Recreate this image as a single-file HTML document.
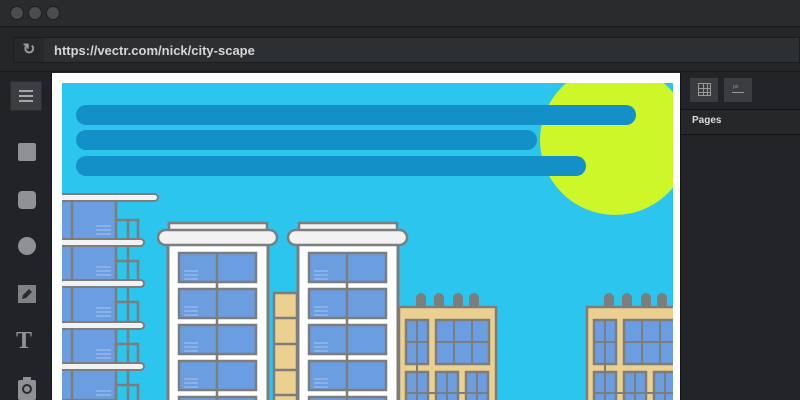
<!DOCTYPE html>
<html><head><meta charset="utf-8"><style>
*{margin:0;padding:0;box-sizing:border-box}
html,body{width:800px;height:400px;overflow:hidden}
body{background:#232427;font-family:"Liberation Sans",sans-serif;position:relative}
.top{position:absolute;left:0;top:0;width:800px;height:27px;background:#2a2b2d;border-bottom:1px solid #18191a}
.dot{position:absolute;top:6px;width:14px;height:14px;border-radius:50%;background:#4a4c4f;border:1px solid #1e1f20}
.addr{position:absolute;left:0;top:28px;width:800px;height:44px;background:#252628;border-bottom:1px solid #18191a}
.inp{position:absolute;left:13px;top:9px;width:787px;height:26px;background:#2d3032;border:1px solid #1c1d1e}
.rel{position:absolute;left:0;top:0;width:30px;height:24px;background:#262829;color:#9a9c9e;font-size:15px;text-align:center;line-height:24px;font-weight:bold}
.url{position:absolute;left:40px;top:5px;color:#d4d5d6;font-size:13px;font-weight:bold}
.left{position:absolute;left:0;top:73px;width:52px;height:327px;background:#222326;border-right:1px solid #151516}
.tool{position:absolute;left:18px;width:18px;height:18px;background:#8f9194}
.right{position:absolute;left:680px;top:73px;width:120px;height:327px;background:#232427;border-left:1px solid #111}
</style></head><body>
<div class="top">
<div class="dot" style="left:10px"></div><div class="dot" style="left:28px"></div><div class="dot" style="left:46px"></div>
</div>
<div class="addr"><div class="inp"><div class="rel">&#x21bb;</div><div class="url">https://vectr.com/nick/city-scape</div></div></div>
<div class="left">
<div style="position:absolute;left:10px;top:8px;width:32px;height:30px;background:#3c3e41;border:1px solid #2c2d2f"></div>
<div style="position:absolute;left:19px;top:17px;width:14px;height:2px;background:#a5a7a9;box-shadow:0 5px 0 #a5a7a9,0 10px 0 #a5a7a9"></div>
<div class="tool" style="top:70px;border-radius:2px"></div>
<div class="tool" style="top:118px;border-radius:4px"></div>
<div class="tool" style="top:164px;border-radius:50%"></div>
<svg style="position:absolute;left:18px;top:212px" width="18" height="18"><rect width="18" height="18" fill="#7f8184"/><path d="M4 14 L5 10 L11 4 L14 7 L8 13 Z" fill="#2a2b2d"/></svg>
<div style="position:absolute;left:16px;top:255px;color:#8f9194;font:bold 24px 'Liberation Serif',serif">T</div>
<svg style="position:absolute;left:18px;top:304px" width="18" height="23"><rect x="5" y="0" width="8" height="4" fill="#8f9194"/><rect y="3" width="18" height="20" rx="2" fill="#8f9194"/><circle cx="9" cy="12" r="4" fill="none" stroke="#2a2b2d" stroke-width="2"/></svg>
</div>
<div class="right">
<div style="position:absolute;left:9px;top:5px;width:28px;height:24px;background:#3a3c3f"></div>
<div style="position:absolute;left:17px;top:10px;width:13px;height:13px;border:1px solid #999;background:linear-gradient(#999,#999) 4px 0/1px 100% no-repeat,linear-gradient(#999,#999) 8px 0/1px 100% no-repeat,linear-gradient(#999,#999) 0 4px/100% 1px no-repeat,linear-gradient(#999,#999) 0 8px/100% 1px no-repeat"></div>
<div style="position:absolute;left:43px;top:5px;width:28px;height:24px;background:#3a3c3f"></div>
<div style="position:absolute;left:52px;top:11px;font-size:5px;color:#999">px</div>
<div style="position:absolute;left:51px;top:19px;width:12px;height:1px;background:#999"></div>
<div style="position:absolute;left:0;top:36px;width:120px;height:26px;border-top:1px solid #151516;border-bottom:1px solid #151516;background:#262729"></div>
<div style="position:absolute;left:11px;top:42px;color:#ddd;font-size:10px;font-weight:bold">Pages</div>
</div>
<svg style="position:absolute;left:52px;top:73px" width="628" height="327">
<rect width="628" height="327" fill="#fff"/>
<svg x="10" y="10" width="611" height="317">
<g transform="translate(-62,-83)">
<rect x="62" y="83" width="611" height="317" fill="#2bc5ee"/>
<circle cx="615" cy="140" r="75" fill="#cdf728"/>
<g stroke="#1490c8" stroke-width="20" stroke-linecap="round">
<line x1="86" y1="115" x2="626" y2="115"/><line x1="86" y1="140" x2="527" y2="140"/><line x1="86" y1="166" x2="576" y2="166"/></g>
<g stroke="#7d7d7d" stroke-width="2.5">
<rect x="40" y="200" width="76" height="200" fill="#6b9ee0"/>
<line x1="72" y1="200" x2="72" y2="400"/>
<g fill="none"><rect x="116" y="220" width="22" height="20"/><rect x="116" y="261" width="22" height="20"/><rect x="116" y="302" width="22" height="20"/><rect x="116" y="344" width="22" height="20"/><rect x="116" y="385" width="22" height="20"/>
<line x1="128" y1="220" x2="128" y2="400"/></g>
</g>
<g stroke="#a9c6ef" stroke-width="1"><path d="M96 226h15M96 230h15M96 234h15M96 267h15M96 271h15M96 275h15M96 308h15M96 312h15M96 316h15M96 350h15M96 354h15M96 358h15M96 391h15M96 395h15"/></g>
<g fill="#f2f2f2" stroke="#7d7d7d" stroke-width="2">
<rect x="40" y="194" width="118" height="7" rx="3.5"/><rect x="40" y="239" width="104" height="7" rx="3.5"/><rect x="40" y="280" width="104" height="7" rx="3.5"/><rect x="40" y="322" width="104" height="7" rx="3.5"/><rect x="40" y="363" width="104" height="7" rx="3.5"/></g>
<g id="tw">
<rect x="168" y="244" width="100" height="170" fill="#fff" stroke="#7d7d7d" stroke-width="3"/>
<rect x="169" y="223" width="98" height="8" fill="#f2f2f2" stroke="#7d7d7d" stroke-width="2.5"/>
<rect x="158" y="230" width="119" height="15" rx="7.5" fill="#f2f2f2" stroke="#7d7d7d" stroke-width="2.5"/>
<g fill="#6b9ee0" stroke="#7d7d7d" stroke-width="2.5">
<rect x="179" y="253" width="77" height="29"/><rect x="179" y="289" width="77" height="29"/><rect x="179" y="325" width="77" height="29"/><rect x="179" y="361" width="77" height="29"/><rect x="179" y="397" width="77" height="29"/></g>
<line x1="217" y1="253" x2="217" y2="400" stroke="#7d7d7d" stroke-width="2.5"/>
<g stroke="#a9c6ef" stroke-width="1"><path d="M184 271h14M184 275h14M184 279h14M184 307h14M184 311h14M184 315h14M184 343h14M184 347h14M184 351h14M184 379h14M184 383h14M184 387h14"/></g>
</g>
<use href="#tw" x="130"/>
<rect x="274" y="293" width="23" height="120" fill="#ecd08f" stroke="#7d7d7d" stroke-width="2.5"/>
<g stroke="#7d7d7d" stroke-width="2.5"><line x1="274" y1="318" x2="297" y2="318"/><line x1="274" y1="344" x2="297" y2="344"/><line x1="274" y1="370" x2="297" y2="370"/><line x1="274" y1="395" x2="297" y2="395"/></g>
<g id="tb">
<g fill="#7d7d7d"><rect x="416" y="293" width="10" height="16" rx="5"/><rect x="434" y="293" width="10" height="16" rx="5"/><rect x="453" y="293" width="10" height="16" rx="5"/><rect x="469" y="293" width="10" height="16" rx="5"/></g>
<rect x="399" y="307" width="97" height="110" fill="#ecd08f" stroke="#7d7d7d" stroke-width="2.5"/>
<g fill="#6b9ee0" stroke="#7d7d7d" stroke-width="2.5">
<rect x="406" y="320" width="22" height="44"/><rect x="436" y="320" width="53" height="44"/>
<rect x="406" y="372" width="22" height="40"/><rect x="436" y="372" width="22" height="40"/><rect x="466" y="372" width="22" height="40"/></g>
<g stroke="#7d7d7d" stroke-width="2"><line x1="417" y1="320" x2="417" y2="400"/><line x1="406" y1="342" x2="428" y2="342"/><line x1="454" y1="320" x2="454" y2="364"/><line x1="472" y1="320" x2="472" y2="364"/><line x1="436" y1="342" x2="489" y2="342"/><line x1="447" y1="372" x2="447" y2="400"/><line x1="477" y1="372" x2="477" y2="400"/><line x1="406" y1="393" x2="489" y2="393"/></g>
</g>
<use href="#tb" x="188"/>
</g></svg>
</svg>
</body></html>
